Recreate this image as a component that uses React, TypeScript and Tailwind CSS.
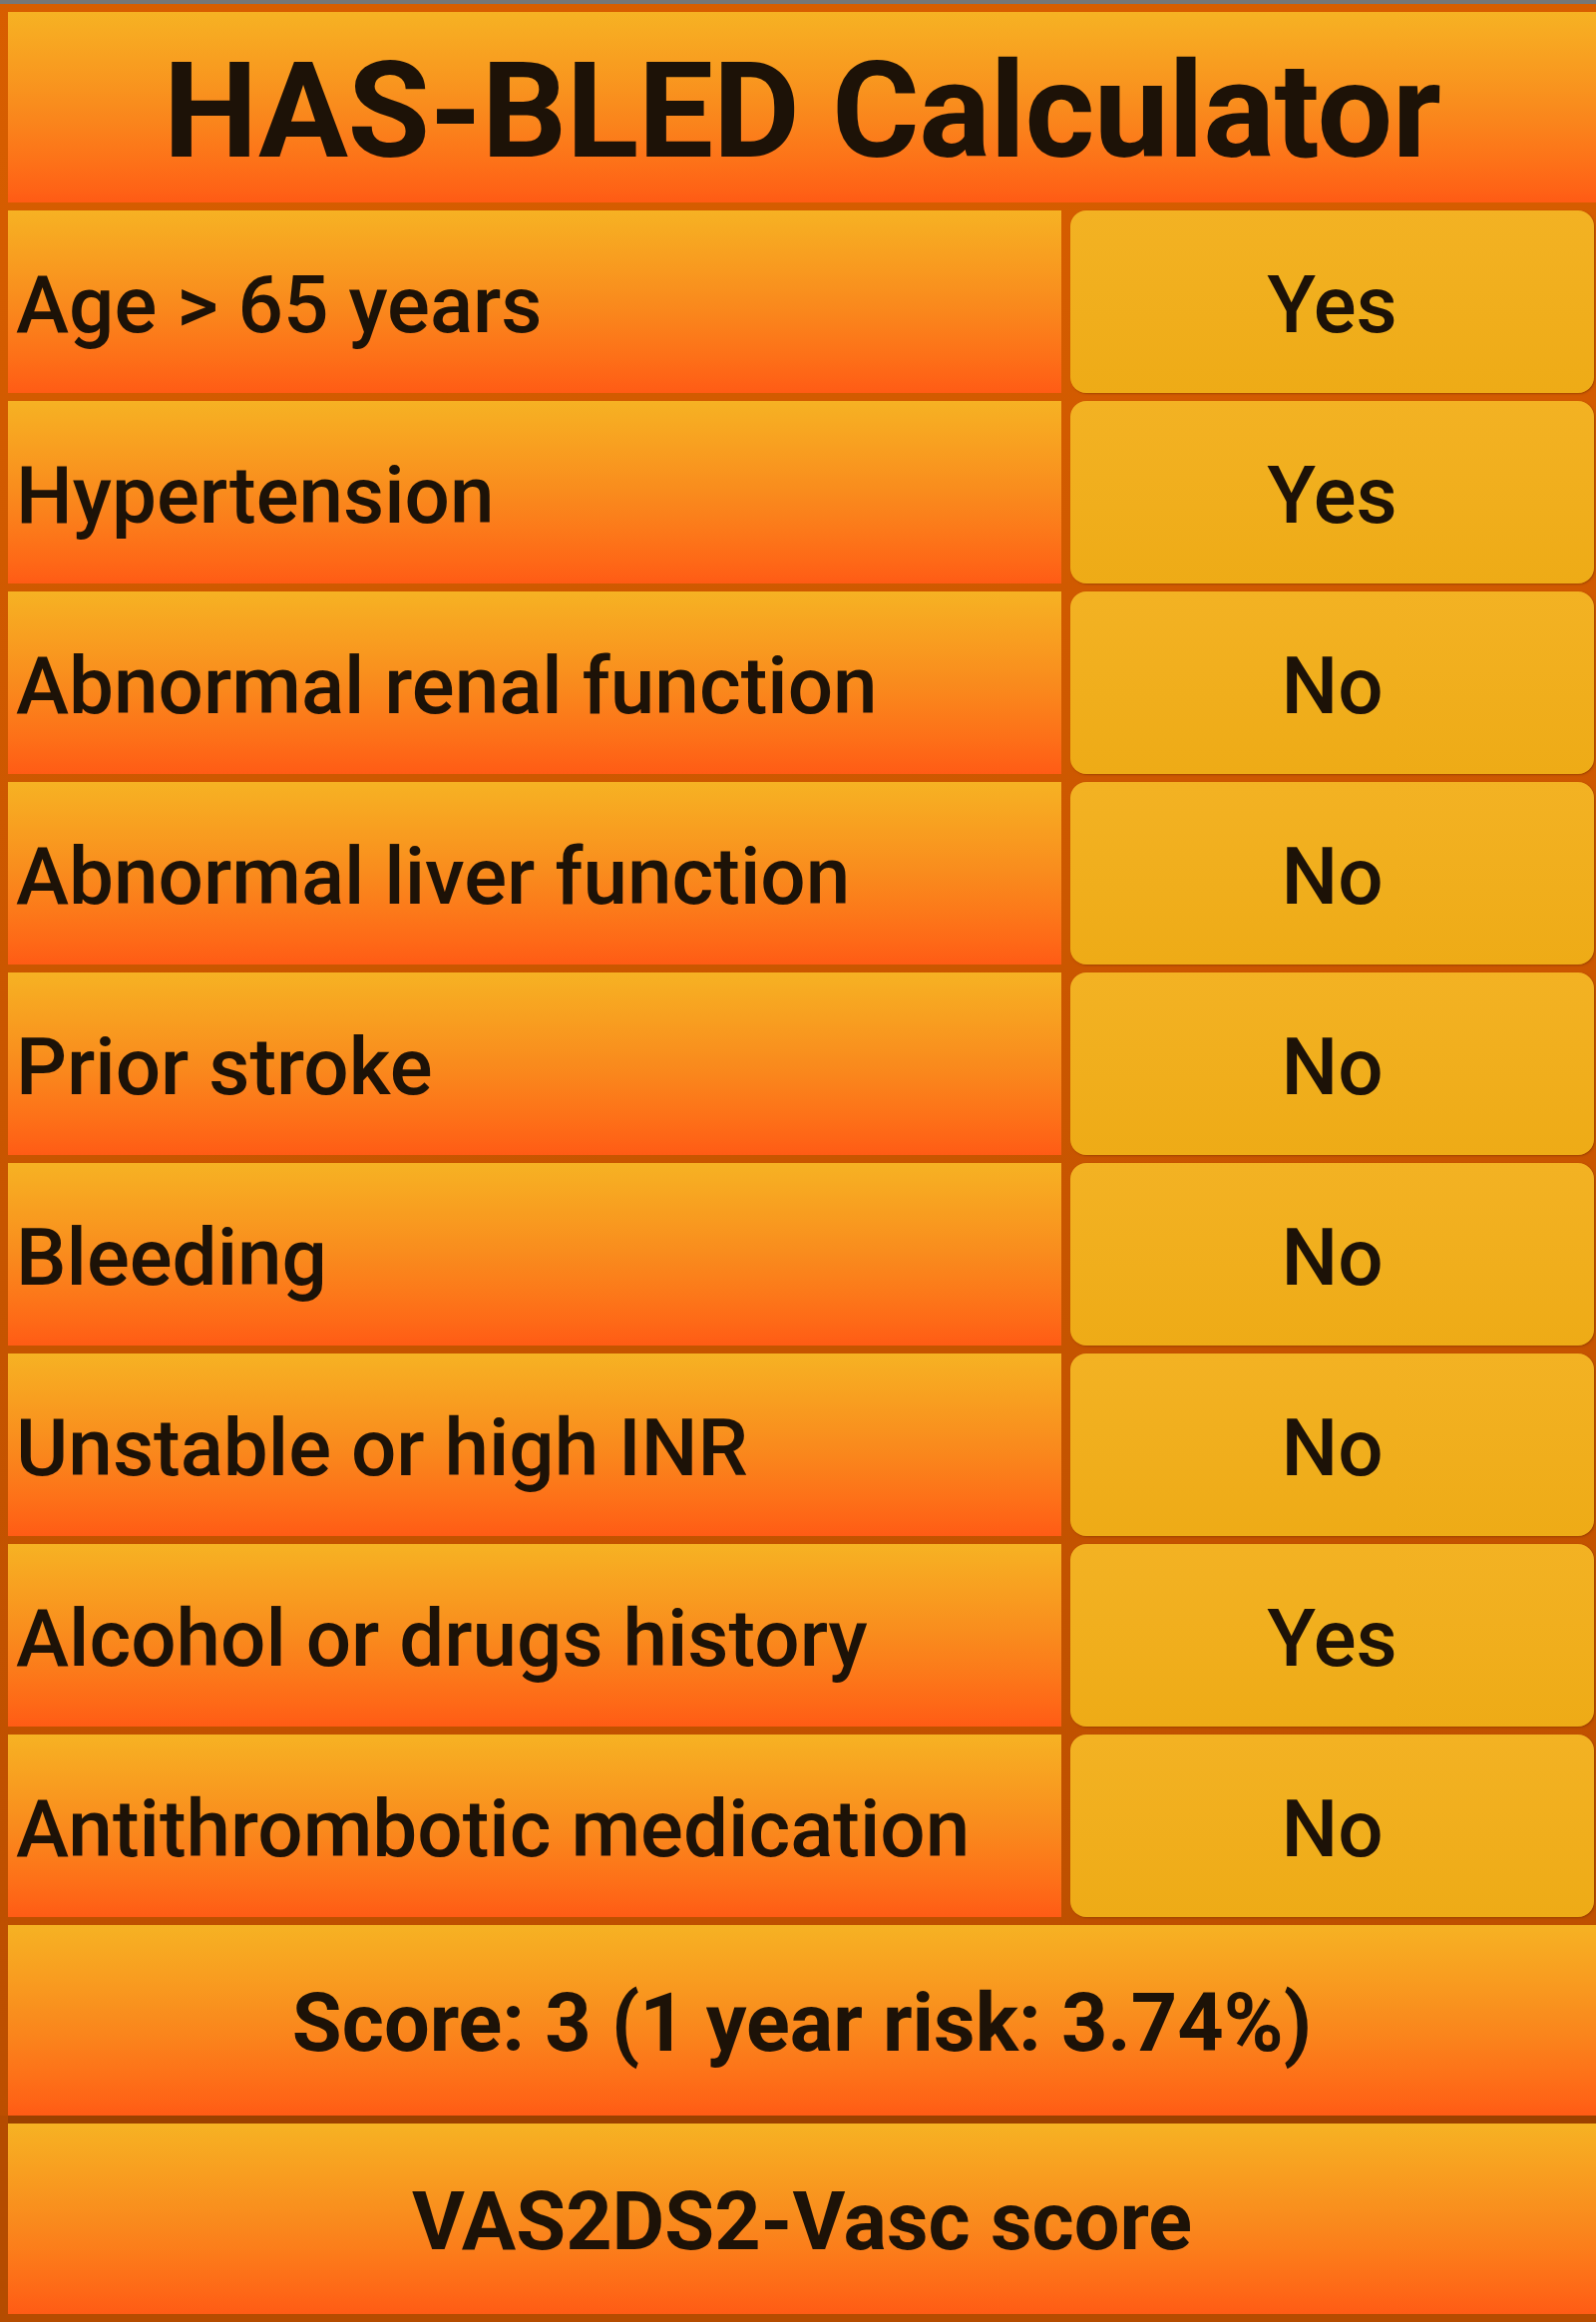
import React, { useState } from 'react';

interface Factor {
  id: string;
  label: string;
  value: boolean;
}

const initialFactors: Factor[] = [
  { id: 'age', label: 'Age > 65 years', value: true },
  { id: 'htn', label: 'Hypertension', value: true },
  { id: 'renal', label: 'Abnormal renal function', value: false },
  { id: 'liver', label: 'Abnormal liver function', value: false },
  { id: 'stroke', label: 'Prior stroke', value: false },
  { id: 'bleeding', label: 'Bleeding', value: false },
  { id: 'inr', label: 'Unstable or high INR', value: false },
  { id: 'alcohol', label: 'Alcohol or drugs history', value: true },
  { id: 'meds', label: 'Antithrombotic medication', value: false },
];

// 1 year major bleeding risk by HAS-BLED score
const riskTable = ['1.13%', '1.02%', '1.88%', '3.74%', '8.70%', '12.5%', '12.5%', '12.5%', '12.5%', '12.5%'];

const orangeBox = 'bg-gradient-to-b from-[#f6b223] via-[#f98b1d] to-[#ff5b15]';

const App: React.FC = () => {
  const [factors, setFactors] = useState<Factor[]>(initialFactors);

  const toggle = (id: string) => {
    setFactors(prev => prev.map(f => (f.id === id ? { ...f, value: !f.value } : f)));
  };

  const score = factors.filter(f => f.value).length;

  return (
    <div className="w-[1600px] h-[2328px] font-['Roboto',sans-serif] text-[#1d1207] bg-gradient-to-b from-[#d85e00] to-[#b94d00] overflow-hidden">
      <div className="h-1 bg-[#777777]"></div>

      <div className="flex flex-col gap-2 pl-2 pt-2">
        {/* Title */}
        <div className={`h-[191px] flex items-center justify-center ${orangeBox}`}>
          <h1 className="text-[134px] font-bold leading-none tracking-[-0.5px] pt-2">HAS-BLED Calculator</h1>
        </div>

        {/* Risk factors */}
        {factors.map(f => (
          <div key={f.id} className="flex h-[183px] gap-[9px] pr-[2px]">
            <div className={`flex-1 flex items-center pl-2 ${orangeBox}`}>
              <span className="text-[80px] font-medium leading-none pt-[6px]">{f.label}</span>
            </div>
            <button
              onClick={() => toggle(f.id)}
              className="w-[525px] rounded-[16px] bg-gradient-to-b from-[#f3b223] to-[#eeab16] shadow-[1px_1px_2px_rgba(120,50,0,0.5)] flex items-center justify-center text-[80px] font-medium leading-none pt-[6px]"
            >
              {f.value ? 'Yes' : 'No'}
            </button>
          </div>
        ))}

        {/* Score */}
        <div className={`h-[191px] flex items-center justify-center ${orangeBox}`}>
          <span className="text-[81px] font-bold leading-none pt-[6px]">
            Score: {score} (1 year risk: {riskTable[score]})
          </span>
        </div>
      </div>

      <div className="pl-2 pt-2 pb-2 bg-[#b54c00]">
        <div className={`h-[191px] flex items-center justify-center ${orangeBox} shadow-[0_-8px_0_#9c4100]`}>
          <span className="text-[81px] font-bold leading-none pt-[6px]">VAS2DS2-Vasc score</span>
        </div>
      </div>
    </div>
  );
};

export default App;
